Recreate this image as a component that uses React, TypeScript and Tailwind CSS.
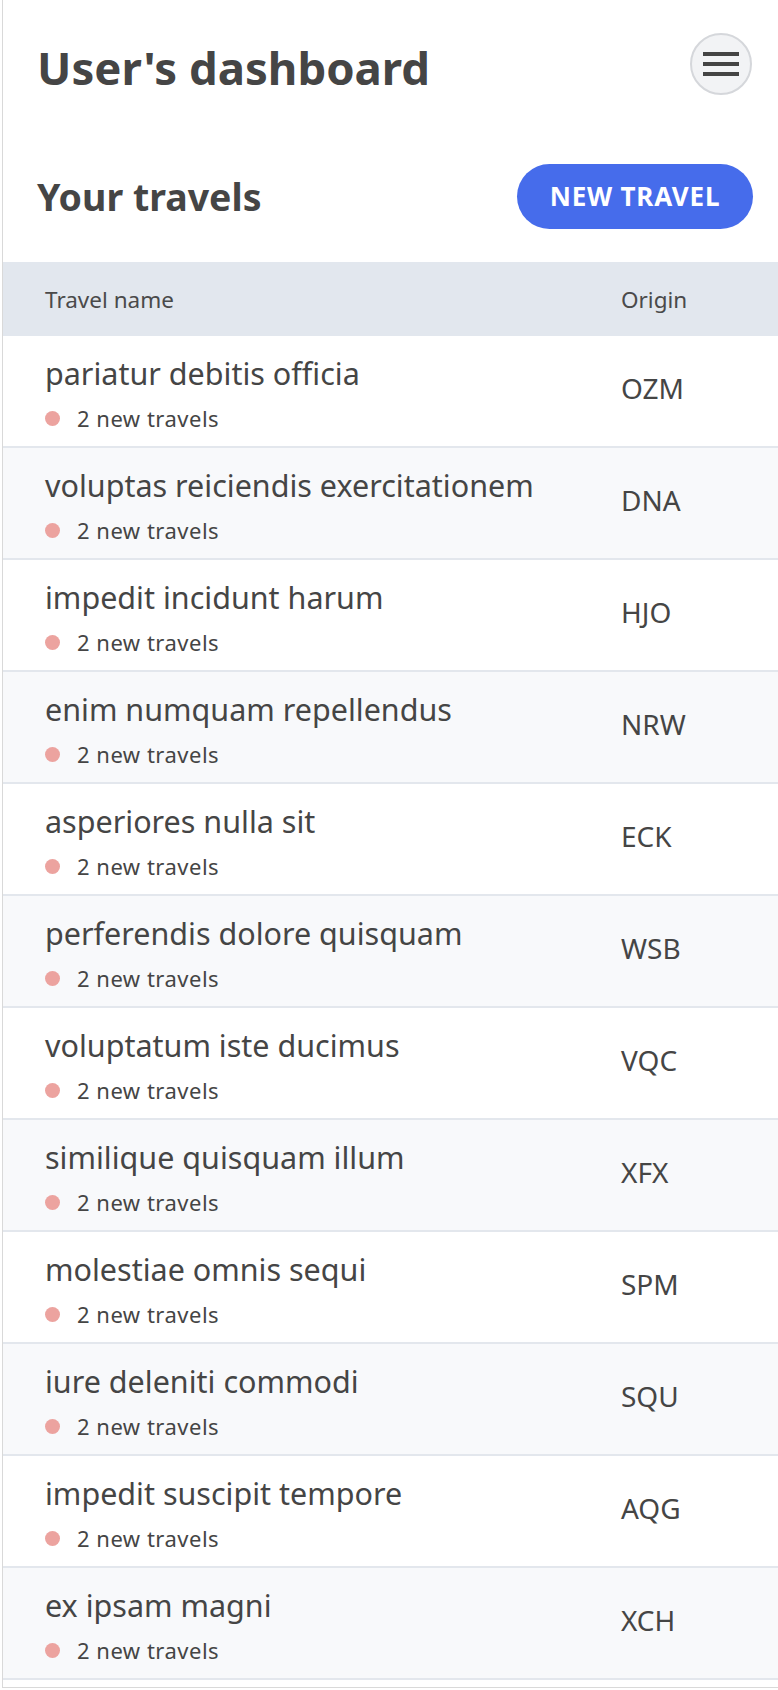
import React from 'react';

const travels = [
  { name: 'pariatur debitis officia', origin: 'OZM' },
  { name: 'voluptas reiciendis exercitationem', origin: 'DNA' },
  { name: 'impedit incidunt harum', origin: 'HJO' },
  { name: 'enim numquam repellendus', origin: 'NRW' },
  { name: 'asperiores nulla sit', origin: 'ECK' },
  { name: 'perferendis dolore quisquam', origin: 'WSB' },
  { name: 'voluptatum iste ducimus', origin: 'VQC' },
  { name: 'similique quisquam illum', origin: 'XFX' },
  { name: 'molestiae omnis sequi', origin: 'SPM' },
  { name: 'iure deleniti commodi', origin: 'SQU' },
  { name: 'impedit suscipit tempore', origin: 'AQG' },
  { name: 'ex ipsam magni', origin: 'XCH' },
];

const MenuButton = () => (
  <button className="w-[62px] h-[62px] rounded-full bg-[#f2f3f5] border-2 border-[#d5d7db] flex flex-col items-center justify-center gap-[6px]">
    <span className="block w-[36px] h-[4px] bg-[#444]" />
    <span className="block w-[36px] h-[4px] bg-[#444]" />
    <span className="block w-[36px] h-[4px] bg-[#444]" />
  </button>
);

export default function App() {
  return (
    <div className="min-h-screen bg-white font-['Noto_Sans',sans-serif] text-[#454545]">
      <div className="ml-[2px] border-l border-b border-[#d9d9d9] pb-[7px]">
        {/* top bar */}
        <div className="flex items-center justify-between pl-[34px] pr-[26px] pt-[33px]">
          <h1 className="pt-[5px] text-[45.5px] leading-[54px] font-bold">User's dashboard</h1>
          <MenuButton />
        </div>

        {/* section header */}
        <div className="flex items-center justify-between pl-[34px] pr-[25px] mt-[69px]">
          <h2 className="text-[37.5px] leading-[46px] font-bold">Your travels</h2>
          <button className="w-[236px] h-[65px] rounded-full bg-[#466ceb] text-white text-[26px] font-bold tracking-[0.03em] flex items-center justify-center">
            NEW TRAVEL
          </button>
        </div>

        {/* table */}
        <div className="mt-[33px]">
          <div className="grid grid-cols-[618px_1fr] h-[74px] items-center bg-[#e2e7ee] text-[22.5px] leading-[30px] text-[#4a4a4a] pt-[2px]">
            <div className="pl-[42px]">Travel name</div>
            <div>Origin</div>
          </div>
          {travels.map((t, i) => (
            <div
              key={t.origin}
              className={
                'grid grid-cols-[618px_1fr] h-[112px] border-b-2 border-[#e3e7ed] ' +
                (i % 2 === 1 ? 'bg-[#f8f9fb]' : 'bg-white')
              }
            >
              <div className="pl-[42px] pt-[18px]">
                <div className="text-[30.5px] leading-[38px] whitespace-nowrap">{t.name}</div>
                <div className="mt-[12px] flex items-center h-[28px] text-[22px] leading-[28px] tracking-[0.5px]">
                  <span className="w-[15px] h-[15px] rounded-full bg-[#eca39f] mr-[17px]" />
                  2 new travels
                </div>
              </div>
              <div className="flex items-center pb-[6px] text-[28px]">{t.origin}</div>
            </div>
          ))}
        </div>
      </div>
    </div>
  );
}
